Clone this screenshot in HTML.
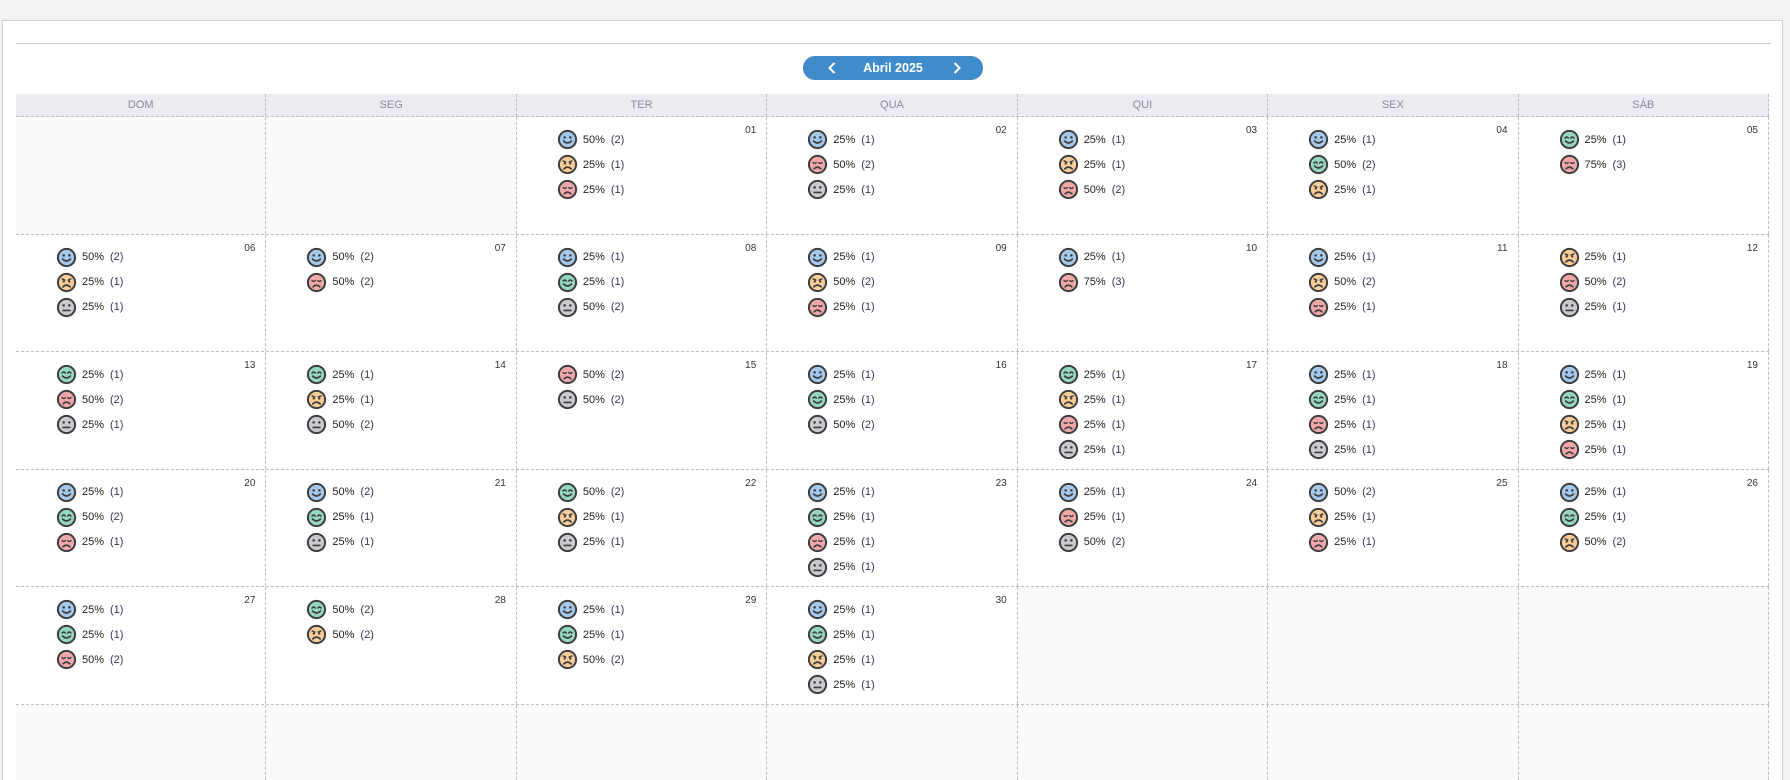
<!DOCTYPE html>
<html><head><meta charset="utf-8">
<style>
*{box-sizing:border-box;margin:0;padding:0}
html,body{width:1790px;height:780px;overflow:hidden;background:#f2f2f2;font-family:"Liberation Sans",sans-serif}
.panel{position:absolute;left:2px;top:20px;width:1781px;height:760px;background:#fff;border:1px solid #cfcfcf;border-bottom:none}
.hr{position:absolute;left:16px;top:43px;width:1755px;height:1px;background:#cccccc}
.btn{position:absolute;left:803px;top:56px;width:180px;height:24px;border-radius:12px;background:#3f8bcb;color:#fff;font-weight:bold;font-size:12.5px;line-height:24px;text-align:center}
.btn svg{position:absolute;top:6px}
.grid{position:absolute;left:16px;top:94px;width:1753px;height:686px;overflow:hidden}
.hd{display:flex;height:23px;background:#edebf2;border-bottom:1px dashed #bdbdc5}
.hd div{flex:1;text-align:center;font-size:11px;color:#8a8a96;line-height:23px;border-right:1px dashed #bdbdc5}
.row{display:flex;height:117.5px;border-bottom:1px dashed #bdbdc5}
.c{flex:1;position:relative;border-right:1px dashed #bdbdc5}
.e{background:#fafafa}
.d{position:absolute;right:10px;top:8px;font-size:10px;color:#333}
.it{position:absolute;left:40px;top:10px}
.i{height:25px;display:flex;align-items:center;font-size:11px;color:#222}
.i svg{width:21px;height:21px;margin-right:5px}
.i b{font-weight:normal;width:28px}
.i span{color:#3b3556}
</style></head><body>
<svg width="0" height="0" style="position:absolute">
<defs>
<symbol id="b" viewBox="0 0 20 20"><circle cx="10" cy="10" r="8.2" fill="#a4c8ea" stroke="#3d3d3d" stroke-width="1.9"/><circle cx="7.3" cy="8" r="1.2" fill="#3d3d3d"/><circle cx="12.7" cy="8" r="1.2" fill="#3d3d3d"/><path d="M6.3 11.5 Q10 15.2 13.7 11.5" fill="none" stroke="#3d3d3d" stroke-width="1.6" stroke-linecap="round"/></symbol>
<symbol id="g" viewBox="0 0 20 20"><circle cx="10" cy="10" r="8.2" fill="#95d6c2" stroke="#3d3d3d" stroke-width="1.9"/><path d="M5.8 8.6 Q7.3 6.8 8.8 8.6 M11.2 8.6 Q12.7 6.8 14.2 8.6" fill="none" stroke="#3d3d3d" stroke-width="1.5" stroke-linecap="round"/><path d="M6.3 11.5 Q10 15.2 13.7 11.5" fill="none" stroke="#3d3d3d" stroke-width="1.6" stroke-linecap="round"/></symbol>
<symbol id="o" viewBox="0 0 20 20"><circle cx="10" cy="10" r="8.2" fill="#f8cc98" stroke="#3d3d3d" stroke-width="1.9"/><path d="M5.8 6.6 L8.4 7.6 M14.2 6.6 L11.6 7.6" stroke="#3d3d3d" stroke-width="1.3" stroke-linecap="round"/><circle cx="7.4" cy="9" r="1.1" fill="#3d3d3d"/><circle cx="12.6" cy="9" r="1.1" fill="#3d3d3d"/><path d="M6.5 14.2 Q10 10.8 13.5 14.2" fill="none" stroke="#3d3d3d" stroke-width="1.6" stroke-linecap="round"/></symbol>
<symbol id="r" viewBox="0 0 20 20"><circle cx="10" cy="10" r="8.2" fill="#efa7aa" stroke="#3d3d3d" stroke-width="1.9"/><path d="M5.8 8.2 Q7.3 9.8 8.8 8.2 M11.2 8.2 Q12.7 9.8 14.2 8.2" fill="none" stroke="#3d3d3d" stroke-width="1.4" stroke-linecap="round"/><path d="M6.8 14 Q10 11 13.2 14" fill="none" stroke="#3d3d3d" stroke-width="1.6" stroke-linecap="round"/></symbol>
<symbol id="n" viewBox="0 0 20 20"><circle cx="10" cy="10" r="8.2" fill="#c9c9ce" stroke="#3d3d3d" stroke-width="1.9"/><circle cx="7.3" cy="8" r="1.2" fill="#3d3d3d"/><circle cx="12.7" cy="8" r="1.2" fill="#3d3d3d"/><path d="M6.8 12.8 H13.2" stroke="#3d3d3d" stroke-width="1.6" stroke-linecap="round"/></symbol>
</defs></svg>
<div class="panel"></div>
<div class="hr"></div>
<div class="btn"><svg style="left:25px" width="8" height="12" viewBox="0 0 8 12"><path d="M6.5 1 L1.5 6 L6.5 11" fill="none" stroke="#fff" stroke-width="2"/></svg>Abril 2025<svg style="left:150px" width="8" height="12" viewBox="0 0 8 12"><path d="M1.5 1 L6.5 6 L1.5 11" fill="none" stroke="#fff" stroke-width="2"/></svg></div>
<div class="grid">
<div class="hd"><div>DOM</div><div>SEG</div><div>TER</div><div>QUA</div><div>QUI</div><div>SEX</div><div>SÁB</div></div>
<div class="row">
<div class="c e"></div><div class="c e"></div>
<div class="c"><div class="d">01</div><div class="it"><div class="i"><svg><use href="#b"/></svg><b>50%</b><span>(2)</span></div><div class="i"><svg><use href="#o"/></svg><b>25%</b><span>(1)</span></div><div class="i"><svg><use href="#r"/></svg><b>25%</b><span>(1)</span></div></div></div>
<div class="c"><div class="d">02</div><div class="it"><div class="i"><svg><use href="#b"/></svg><b>25%</b><span>(1)</span></div><div class="i"><svg><use href="#r"/></svg><b>50%</b><span>(2)</span></div><div class="i"><svg><use href="#n"/></svg><b>25%</b><span>(1)</span></div></div></div>
<div class="c"><div class="d">03</div><div class="it"><div class="i"><svg><use href="#b"/></svg><b>25%</b><span>(1)</span></div><div class="i"><svg><use href="#o"/></svg><b>25%</b><span>(1)</span></div><div class="i"><svg><use href="#r"/></svg><b>50%</b><span>(2)</span></div></div></div>
<div class="c"><div class="d">04</div><div class="it"><div class="i"><svg><use href="#b"/></svg><b>25%</b><span>(1)</span></div><div class="i"><svg><use href="#g"/></svg><b>50%</b><span>(2)</span></div><div class="i"><svg><use href="#o"/></svg><b>25%</b><span>(1)</span></div></div></div>
<div class="c"><div class="d">05</div><div class="it"><div class="i"><svg><use href="#g"/></svg><b>25%</b><span>(1)</span></div><div class="i"><svg><use href="#r"/></svg><b>75%</b><span>(3)</span></div></div></div>
</div>
<div class="row">
<div class="c"><div class="d">06</div><div class="it"><div class="i"><svg><use href="#b"/></svg><b>50%</b><span>(2)</span></div><div class="i"><svg><use href="#o"/></svg><b>25%</b><span>(1)</span></div><div class="i"><svg><use href="#n"/></svg><b>25%</b><span>(1)</span></div></div></div>
<div class="c"><div class="d">07</div><div class="it"><div class="i"><svg><use href="#b"/></svg><b>50%</b><span>(2)</span></div><div class="i"><svg><use href="#r"/></svg><b>50%</b><span>(2)</span></div></div></div>
<div class="c"><div class="d">08</div><div class="it"><div class="i"><svg><use href="#b"/></svg><b>25%</b><span>(1)</span></div><div class="i"><svg><use href="#g"/></svg><b>25%</b><span>(1)</span></div><div class="i"><svg><use href="#n"/></svg><b>50%</b><span>(2)</span></div></div></div>
<div class="c"><div class="d">09</div><div class="it"><div class="i"><svg><use href="#b"/></svg><b>25%</b><span>(1)</span></div><div class="i"><svg><use href="#o"/></svg><b>50%</b><span>(2)</span></div><div class="i"><svg><use href="#r"/></svg><b>25%</b><span>(1)</span></div></div></div>
<div class="c"><div class="d">10</div><div class="it"><div class="i"><svg><use href="#b"/></svg><b>25%</b><span>(1)</span></div><div class="i"><svg><use href="#r"/></svg><b>75%</b><span>(3)</span></div></div></div>
<div class="c"><div class="d">11</div><div class="it"><div class="i"><svg><use href="#b"/></svg><b>25%</b><span>(1)</span></div><div class="i"><svg><use href="#o"/></svg><b>50%</b><span>(2)</span></div><div class="i"><svg><use href="#r"/></svg><b>25%</b><span>(1)</span></div></div></div>
<div class="c"><div class="d">12</div><div class="it"><div class="i"><svg><use href="#o"/></svg><b>25%</b><span>(1)</span></div><div class="i"><svg><use href="#r"/></svg><b>50%</b><span>(2)</span></div><div class="i"><svg><use href="#n"/></svg><b>25%</b><span>(1)</span></div></div></div>
</div>
<div class="row">
<div class="c"><div class="d">13</div><div class="it"><div class="i"><svg><use href="#g"/></svg><b>25%</b><span>(1)</span></div><div class="i"><svg><use href="#r"/></svg><b>50%</b><span>(2)</span></div><div class="i"><svg><use href="#n"/></svg><b>25%</b><span>(1)</span></div></div></div>
<div class="c"><div class="d">14</div><div class="it"><div class="i"><svg><use href="#g"/></svg><b>25%</b><span>(1)</span></div><div class="i"><svg><use href="#o"/></svg><b>25%</b><span>(1)</span></div><div class="i"><svg><use href="#n"/></svg><b>50%</b><span>(2)</span></div></div></div>
<div class="c"><div class="d">15</div><div class="it"><div class="i"><svg><use href="#r"/></svg><b>50%</b><span>(2)</span></div><div class="i"><svg><use href="#n"/></svg><b>50%</b><span>(2)</span></div></div></div>
<div class="c"><div class="d">16</div><div class="it"><div class="i"><svg><use href="#b"/></svg><b>25%</b><span>(1)</span></div><div class="i"><svg><use href="#g"/></svg><b>25%</b><span>(1)</span></div><div class="i"><svg><use href="#n"/></svg><b>50%</b><span>(2)</span></div></div></div>
<div class="c"><div class="d">17</div><div class="it"><div class="i"><svg><use href="#g"/></svg><b>25%</b><span>(1)</span></div><div class="i"><svg><use href="#o"/></svg><b>25%</b><span>(1)</span></div><div class="i"><svg><use href="#r"/></svg><b>25%</b><span>(1)</span></div><div class="i"><svg><use href="#n"/></svg><b>25%</b><span>(1)</span></div></div></div>
<div class="c"><div class="d">18</div><div class="it"><div class="i"><svg><use href="#b"/></svg><b>25%</b><span>(1)</span></div><div class="i"><svg><use href="#g"/></svg><b>25%</b><span>(1)</span></div><div class="i"><svg><use href="#r"/></svg><b>25%</b><span>(1)</span></div><div class="i"><svg><use href="#n"/></svg><b>25%</b><span>(1)</span></div></div></div>
<div class="c"><div class="d">19</div><div class="it"><div class="i"><svg><use href="#b"/></svg><b>25%</b><span>(1)</span></div><div class="i"><svg><use href="#g"/></svg><b>25%</b><span>(1)</span></div><div class="i"><svg><use href="#o"/></svg><b>25%</b><span>(1)</span></div><div class="i"><svg><use href="#r"/></svg><b>25%</b><span>(1)</span></div></div></div>
</div>
<div class="row">
<div class="c"><div class="d">20</div><div class="it"><div class="i"><svg><use href="#b"/></svg><b>25%</b><span>(1)</span></div><div class="i"><svg><use href="#g"/></svg><b>50%</b><span>(2)</span></div><div class="i"><svg><use href="#r"/></svg><b>25%</b><span>(1)</span></div></div></div>
<div class="c"><div class="d">21</div><div class="it"><div class="i"><svg><use href="#b"/></svg><b>50%</b><span>(2)</span></div><div class="i"><svg><use href="#g"/></svg><b>25%</b><span>(1)</span></div><div class="i"><svg><use href="#n"/></svg><b>25%</b><span>(1)</span></div></div></div>
<div class="c"><div class="d">22</div><div class="it"><div class="i"><svg><use href="#g"/></svg><b>50%</b><span>(2)</span></div><div class="i"><svg><use href="#o"/></svg><b>25%</b><span>(1)</span></div><div class="i"><svg><use href="#n"/></svg><b>25%</b><span>(1)</span></div></div></div>
<div class="c"><div class="d">23</div><div class="it"><div class="i"><svg><use href="#b"/></svg><b>25%</b><span>(1)</span></div><div class="i"><svg><use href="#g"/></svg><b>25%</b><span>(1)</span></div><div class="i"><svg><use href="#r"/></svg><b>25%</b><span>(1)</span></div><div class="i"><svg><use href="#n"/></svg><b>25%</b><span>(1)</span></div></div></div>
<div class="c"><div class="d">24</div><div class="it"><div class="i"><svg><use href="#b"/></svg><b>25%</b><span>(1)</span></div><div class="i"><svg><use href="#r"/></svg><b>25%</b><span>(1)</span></div><div class="i"><svg><use href="#n"/></svg><b>50%</b><span>(2)</span></div></div></div>
<div class="c"><div class="d">25</div><div class="it"><div class="i"><svg><use href="#b"/></svg><b>50%</b><span>(2)</span></div><div class="i"><svg><use href="#o"/></svg><b>25%</b><span>(1)</span></div><div class="i"><svg><use href="#r"/></svg><b>25%</b><span>(1)</span></div></div></div>
<div class="c"><div class="d">26</div><div class="it"><div class="i"><svg><use href="#b"/></svg><b>25%</b><span>(1)</span></div><div class="i"><svg><use href="#g"/></svg><b>25%</b><span>(1)</span></div><div class="i"><svg><use href="#o"/></svg><b>50%</b><span>(2)</span></div></div></div>
</div>
<div class="row">
<div class="c"><div class="d">27</div><div class="it"><div class="i"><svg><use href="#b"/></svg><b>25%</b><span>(1)</span></div><div class="i"><svg><use href="#g"/></svg><b>25%</b><span>(1)</span></div><div class="i"><svg><use href="#r"/></svg><b>50%</b><span>(2)</span></div></div></div>
<div class="c"><div class="d">28</div><div class="it"><div class="i"><svg><use href="#g"/></svg><b>50%</b><span>(2)</span></div><div class="i"><svg><use href="#o"/></svg><b>50%</b><span>(2)</span></div></div></div>
<div class="c"><div class="d">29</div><div class="it"><div class="i"><svg><use href="#b"/></svg><b>25%</b><span>(1)</span></div><div class="i"><svg><use href="#g"/></svg><b>25%</b><span>(1)</span></div><div class="i"><svg><use href="#o"/></svg><b>50%</b><span>(2)</span></div></div></div>
<div class="c"><div class="d">30</div><div class="it"><div class="i"><svg><use href="#b"/></svg><b>25%</b><span>(1)</span></div><div class="i"><svg><use href="#g"/></svg><b>25%</b><span>(1)</span></div><div class="i"><svg><use href="#o"/></svg><b>25%</b><span>(1)</span></div><div class="i"><svg><use href="#n"/></svg><b>25%</b><span>(1)</span></div></div></div>
<div class="c e"></div><div class="c e"></div><div class="c e"></div>
</div>
<div class="row" style="height:80px;border-bottom:none">
<div class="c e"></div><div class="c e"></div><div class="c e"></div><div class="c e"></div><div class="c e"></div><div class="c e"></div><div class="c e"></div>
</div>
</div>
</body></html>
